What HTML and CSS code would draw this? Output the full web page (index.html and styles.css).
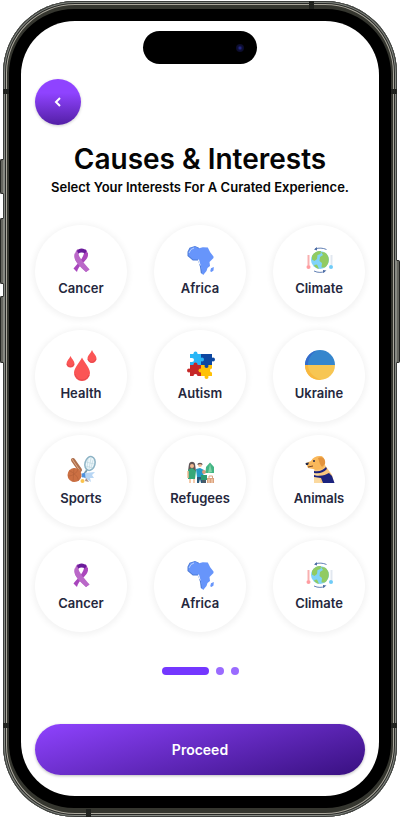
FILE: index.html
```html
<!DOCTYPE html>
<html lang="en">
<head>
<meta charset="utf-8">
<meta name="viewport" content="width=device-width, initial-scale=1">
<title>Causes &amp; Interests</title>
<link rel="stylesheet" href="styles.css">
</head>
<body>
<svg class="sprite" aria-hidden="true">
  <symbol id="ribbon" viewBox="0 0 32 32">
    <path fill="#a845bd" d="M23 8C23 14 13 21 12 27L8.500 23.500C12 19 18 14 19 8Z"/>
    <path fill="#b968c7" d="M10 8C10 15 19 20 24.500 24.500L21 27C14 21 8.500 15 9.500 9Z"/>
    <path fill="#ba68c8" d="M9.500 11C10 8 11 5 13 4L14 8C13 10 14 12 24.500 24.500L21 27C15 20 9 17 9.500 11Z"/>
    <path fill="#ab47bc" d="M19 8L20.500 4C23 7 24 11 21.500 14L18.500 17.500L16.500 15C18.500 12 20 10 19 8Z"/>
    <path fill="#6a1b9a" d="M12 6C13 2.500 20 2.500 21.500 6L20 8.500C18 7 15 7 13.500 8.500Z"/>
  </symbol>
  <symbol id="africa" viewBox="0 0 32 32">
    <path fill="#4d7bd6" d="M5.500 2.700L11 1L15 2.700L14 17L17 21L19.800 30L16.800 28L16 21.700L14 15.500H8.800L3.500 11V6.700Z"/>
    <path fill="#6795fb" d="M6.500 3L11.500 1.500L14 3.500L18.800 2.300L23.800 2.500L26.200 7.300L29.500 11.500V13L25.500 17L26 21L23.500 23L22.500 26L19.800 29.300L18 29L17 21.700L15 14.500L9 14.500L4.500 10.500V6.500ZM29.800 22L29.500 25.500L27.500 27L26.200 26.200L27 23.200Z"/>
    <path fill="none" stroke="#b7d0fd" d="M5 8L7 4.500L10 3"/>
  </symbol>
  <symbol id="climate" viewBox="0 0 32 32">
    <circle cx="17" cy="15" r="9" fill="#7fd3fa"/>
    <path fill="#91cb62" d="M9 11C11 7 15 5.500 18 6L17.500 9L14.500 10L14 14L11.500 16L9 14.500ZM18 7L22 7.500C27 11 27 18 22 22.500L18.500 22.500L19 18L16.500 16L17 12L20 10ZM11 20L14 19.500L16 23.800C14 23.800 12 22.500 11 20Z"/>
    <path fill="none" stroke="#6381b5" d="M12 4C16 2.500 20 3 23.500 4.500M11 26C15 28 19 27.500 22 26.500"/>
    <path fill="#4e6da5" d="M11 4.500L14 2V5.500ZM23.500 25.500L20 25V28Z"/>
    <path stroke="#f8b0b0" stroke-width="2" d="M5.500 10V20"/><path stroke="#e2e8f0" stroke-width="2" d="M28.500 10V20"/>
    <circle cx="5.500" cy="22" r="2" fill="#ff9ca0"/><circle cx="28" cy="22" r="2" fill="#6fcbf7"/>
  </symbol>
</svg>
<div class="phone">
  <span class="key mute"></span><span class="key up"></span><span class="key down"></span><span class="key power"></span>
  <span class="seam top-right"></span><span class="seam bottom-left"></span>
  <span class="band upper"></span><span class="band lower"></span>
  <div class="bezel">
    <main class="screen">
      <div class="island"><span class="camera"></span></div>
      <button class="back" type="button" aria-label="Back">
        <svg viewBox="0 0 12 12" width="12" height="12"><path d="M8 2L4 6L8 10" fill="none" stroke="#fff" stroke-width="2"/></svg>
      </button>
      <h1>Causes &amp; Interests</h1>
      <p class="lead">Select Your Interests For A Curated Experience.</p>
      <div class="causes">
        <button class="cause" type="button"><svg><use href="#ribbon"/></svg>Cancer</button>
        <button class="cause" type="button"><svg><use href="#africa"/></svg>Africa</button>
        <button class="cause" type="button"><svg><use href="#climate"/></svg>Climate</button>
        <button class="cause" type="button"><svg viewBox="0 0 32 32">
          <path fill="#fb5555" d="M17 7.500C19 12 25 18 25 23A8 8 0 0 1 9 23C9 18 15 12 17 7.500ZM5.500 6C6.500 8.500 9.500 11 9.500 13.500A4 4 0 0 1 1.500 13.500C1.500 11 4.500 8.500 5.500 6ZM27 0C28 3 31.500 5.500 31.500 8.500A4.500 4.500 0 0 1 22.500 8.500C22.500 5.500 26 3 27 0Z"/>
          <path fill="none" stroke="#e5484d" d="M10 24C11 28 14 30 17 30C20 30 23 28 24 25M2 14C3 17 7 18 9 14M23 9C24 13 29 13.500 31 9"/>
        </svg>Health</button>
        <button class="cause" type="button"><svg viewBox="0 0 32 32">
          <path fill="#29b6f6" d="M6 4H17V15H6V12H8A2 2 0 0 0 8 8H6Z"/><circle cx="11.500" cy="3.500" r="2" fill="#29b6f6"/>
          <path fill="#0d47a1" d="M17 4H28V15H17Z"/><circle cx="29" cy="9.500" r="2" fill="#0d47a1"/>
          <path fill="#c62828" d="M6 15H17V26H13.500A2 2 0 0 0 9.500 26H6Z"/><circle cx="5" cy="20.500" r="2" fill="#c62828"/>
          <path fill="#ffc107" d="M17 15H28V18.500A2 2 0 0 0 28 22.500V26H17Z"/><circle cx="22.500" cy="27" r="2" fill="#ffc107"/>
          <circle cx="18" cy="9.500" r="2" fill="#29b6f6"/><circle cx="11.500" cy="14.500" r="2" fill="#c62828"/><circle cx="22.500" cy="16" r="2" fill="#0d47a1"/><circle cx="16.500" cy="20.500" r="2" fill="#ffc107"/>
        </svg>Autism</button>
        <button class="cause" type="button"><svg viewBox="0 0 32 32">
          <path fill="#3586cd" d="M2 15A15 15 0 0 1 32 15Z"/><path fill="#f7c653" d="M2 15A15 15 0 0 0 32 15Z"/>
          <path fill="#346ccc" d="M2 15C2 8 7 2 13 1C8 4 5 9 5 15Z"/><path fill="#f8b83e" d="M2 15H5C5 22 11 28 18 29.500C9 31 2 24 2 15Z"/>
        </svg>Ukraine</button>
        <button class="cause" type="button"><svg viewBox="0 0 32 32">
          <path stroke="#ad6f4d" stroke-width="4" stroke-linecap="round" d="M8 5L15 15"/><path stroke="#e2ac87" d="M7 4L15 16"/>
          <path stroke="#789aad" stroke-width="2" d="M22 15L17 22"/>
          <ellipse cx="25" cy="8.500" rx="5" ry="7" transform="rotate(15 25 8.500)" fill="#eef7fa" stroke="#8db3c5" stroke-width="1.500"/>
          <path stroke="#b9d3dd" stroke-width=".6" d="M23 4L22 13M26 3L24 14M28 5L26 13M21 7L29 9M20.500 11L28 13"/>
          <path fill="#b8d6f4" d="M19 18L30 17L27 20L29 23L25 23L26 27L20 23Z"/><path fill="#4d92df" d="M16.500 18.500L20 18L20.500 23L17 22Z"/><path fill="#a98f87" d="M21 23L24 27L20 26Z"/>
          <circle cx="9.500" cy="20" r="7" fill="#cc7043"/><path fill="none" stroke="#b5613a" stroke-width=".7" d="M4 15.500C9 18 13 21 13.500 26M3 21C8 21 12 18 13 14M9 13L8 27"/>
          <circle cx="17.500" cy="26" r="2" fill="#fbc34b"/>
        </svg>Sports</button>
        <button class="cause" type="button"><svg viewBox="0 0 32 32">
          <path fill="#625657" d="M4 16L5 9C6 6 10 6 11 9L12 16Z"/><circle cx="8" cy="11" r="2" fill="#f2ba93"/>
          <path fill="#36a878" d="M4 15L8 13L12 16L11 24H4Z"/><path stroke="#f2ba93" stroke-width="1.500" d="M6 24V28M10 24V28M4 16V23"/>
          <circle cx="16" cy="10" r="2" fill="#f2ba93"/><path fill="#625657" d="M13.500 10C13 7 19 7 18.500 10L16 9Z"/>
          <path fill="#2499c6" d="M12 14L16 13L20 15L19 22H13Z"/><path fill="#285a7b" d="M13 22H19V28H17L16 24L15 28H13Z"/>
          <circle cx="20" cy="17" r="2" fill="#d99d7b"/><path fill="#2a9c72" d="M17 20H23V25H17Z"/><path fill="#495b69" d="M18 25H22V28H18Z"/>
          <path fill="#43b584" d="M21.500 18L22 12L26 7.500L30 12V18Z"/><path fill="#82d3a7" d="M26 9L28 17L24 18Z"/>
          <path fill="#dba27f" d="M23 23H30V28H23Z"/><path fill="none" stroke="#dba27f" d="M25 23V21H28.500V23"/><path stroke="#faddc2" d="M25 24V28M28 24V28"/>
        </svg>Refugees</button>
        <button class="cause" type="button"><svg viewBox="0 0 32 32">
          <path fill="#f8c77d" d="M11 28V16L13 10L22 10L29 20L31 28Z"/><path fill="#fbd99f" d="M11 17L15 17L18 28H11Z"/>
          <path fill="#f9b85b" d="M3 8L8 6C10 2 14 .500 18 1C21 1.500 22 5 22 9L20 14L13 15L10 14L5 13L4 11Z"/>
          <path fill="#e4943d" d="M15 3C19 1 23 4 22 9L19 12L17 9Z"/><path fill="#242a49" d="M2.500 8L6 7.500L5 10L3 10Z"/><circle cx="11" cy="6" r="1" fill="#242a49"/><path stroke="#76442d" d="M5 12L10 11"/>
          <path fill="#1b237e" d="M11 16C17 17 20 15 23 12L24 14C20 18 16 19 11 18ZM11 20C18 22 22 20 26 18L29 21L31.500 28H20L18 23L11 22Z"/>
        </svg>Animals</button>
        <button class="cause" type="button"><svg><use href="#ribbon"/></svg>Cancer</button>
        <button class="cause" type="button"><svg><use href="#africa"/></svg>Africa</button>
        <button class="cause" type="button"><svg><use href="#climate"/></svg>Climate</button>
      </div>
      <div class="pager"><span class="dot current"></span><span class="dot"></span><span class="dot"></span></div>
      <button class="proceed" type="button">Proceed</button>
    </main>
  </div>
</div>
</body>
</html>
```
FILE: styles.css
```css
* { box-sizing: border-box; }

body {
  margin: 0;
  padding: 1px 3px;
  background: #fff;
  color: #050505;
  font-family: Inter, "Liberation Sans", sans-serif;
}

button {
  border: 0;
  padding: 0;
  font: inherit;
  cursor: pointer;
}

.sprite { position: absolute; width: 0; height: 0; }

.phone {
  position: relative;
  padding: 8px 6px 9px;
  border-radius: 72px;
  background: #35362f;
  box-shadow: inset 0 0 0 1px #3c3e3c, inset 0 0 0 2px #858982, inset 0 0 0 3px #292a28, inset 0 0 0 4px #aaa79c;
}

.bezel {
  position: relative;
  padding: 12px;
  border-radius: 65px;
  background: #000;
}

.screen {
  position: relative;
  display: flex;
  flex-direction: column;
  padding: 58px 14px 21px;
  border-radius: 54px;
  background: #fff;
}

.island {
  position: absolute;
  top: 10px;
  left: 50%;
  display: flex;
  align-items: center;
  justify-content: flex-end;
  width: 114px;
  height: 33px;
  padding-right: 13px;
  border-radius: 17px;
  background: #000;
  transform: translateX(-50%);
}

.camera {
  width: 8px;
  height: 8px;
  border-radius: 50%;
  background: radial-gradient(circle, #2d32a5 0, #0e0f38 40%, #080713 100%);
}

.back {
  display: grid;
  place-items: center;
  width: 46px;
  height: 46px;
  border-radius: 50%;
  background: linear-gradient(180deg, #8f43ff 30%, #531fa5 100%);
  box-shadow: 0 1px 3px #0003;
}

h1 {
  margin: 16px 0 0;
  font-size: 28px;
  font-weight: 600;
  line-height: 36px;
  text-align: center;
}

.lead {
  margin: 0 0 28px;
  font-size: 13px;
  font-weight: 600;
  line-height: 20px;
  text-align: center;
  white-space: nowrap;
}

.causes {
  display: grid;
  grid-template-columns: repeat(3, 92px);
  justify-content: space-between;
  row-gap: 13px;
}

.cause {
  display: flex;
  flex-direction: column;
  align-items: center;
  gap: 2px;
  height: 92px;
  padding-top: 20px;
  border-radius: 50%;
  background: #fff;
  box-shadow: 0 1px 6px 2px #0000000d;
  color: #25273d;
  font-size: 13px;
  font-weight: 600;
  line-height: 18px;
}

.cause svg { width: 32px; height: 32px; }

.pager {
  display: flex;
  justify-content: center;
  gap: 7px;
  margin: 35px 0 49px;
}

.dot {
  width: 8px;
  height: 8px;
  border-radius: 4px;
  background: #9a6bff;
}

.current { width: 47px; background: #7437ff; }

.proceed {
  height: 51px;
  border-radius: 26px;
  background: linear-gradient(165deg, #8f43ff 0%, #381080 100%);
  box-shadow: 0 1px 3px #0004;
  color: #fff;
  font-size: 14px;
  font-weight: 600;
}

/* Hardware details on the phone's edge */
.key {
  position: absolute;
  left: -3px;
  width: 4px;
  border: 1px solid #242522;
  border-right-color: #898982;
  border-radius: 2px 0 0 2px;
  background: #65665f;
}

.mute { top: 158px; height: 35px; }
.up { top: 217px; height: 66px; }
.down { top: 295px; height: 67px; }
.power { top: 259px; right: -3px; left: auto; height: 103px; transform: scaleX(-1); }

.seam {
  position: absolute;
  width: 5px;
  height: 8px;
  background: #20221e;
}

.top-right { top: 0; right: 83px; }
.bottom-left { bottom: 0; left: 83px; }

.band {
  position: absolute;
  right: 0;
  left: 0;
  height: 5px;
  background: #20221e;
}

.upper { top: 88px; }
.lower { bottom: 89px; }
```
